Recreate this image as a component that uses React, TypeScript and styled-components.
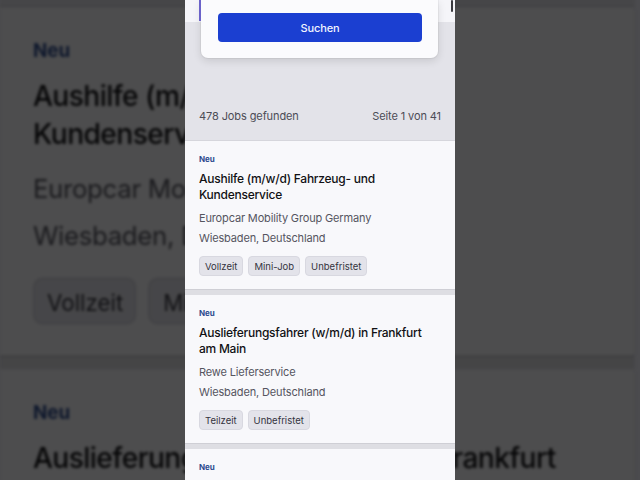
import React from "react";
import styled, { createGlobalStyle } from "styled-components";

const Global = createGlobalStyle`
  html, body { margin: 0; padding: 0; background: #4b4b4e; }
  body { font-family: Inter, "Noto Sans", "Liberation Sans", sans-serif; }
  * { box-sizing: border-box; }
`;

const Stage = styled.div`
  position: relative;
  width: 640px;
  height: 480px;
  overflow: hidden;
  display: flex;
  justify-content: center;
  background: #4b4b4e;
`;

const Backdrop = styled.div`
  position: absolute;
  left: 0;
  top: -323.6px;
  transform: scale(2.35);
  transform-origin: 0 0;
  filter: blur(0.6px) brightness(0.31);
`;

const Screen = styled.div`
  position: relative;
  width: 270px;
  height: 480px;
  overflow: hidden;
  display: flex;
  flex-direction: column;
  background: #dedee3;
`;

const Header = styled.div`
  display: flex;
  flex-direction: column;
  padding: 0 17px 0 16px;
  background: linear-gradient(#f5f5f9 0 22px, #e3e3e9 22px);
  border-bottom: 1px solid #d6d6dc;
`;

const SearchCard = styled.div`
  position: relative;
  background: #fbfbfd;
  border-radius: 0 0 7px 7px;
  padding: 13px 16px 16px 17px;
  box-shadow: 0 3px 8px rgba(0, 0, 0, 0.12), 0 0 0 1px rgba(0, 0, 0, 0.04);
  &::before {
    content: "";
    position: absolute;
    left: -2px;
    top: 0;
    width: 2px;
    height: 21px;
    background: #6b62c9;
  }
`;

const SearchButton = styled.button`
  display: block;
  width: 100%;
  height: 29px;
  border: none;
  border-radius: 4px;
  background: #1b3fd1;
  color: #f2f4ff;
  font-family: inherit;
  font-size: 11px;
  font-weight: 500;
  letter-spacing: -0.1px;
`;

const ResultsRow = styled.div`
  display: flex;
  justify-content: space-between;
  align-items: center;
  margin: 50px -3px 0 -2px;
  height: 16px;
  margin-bottom: 16px;
  font-size: 11px;
  letter-spacing: -0.1px;
  color: #4c4c56;
`;

const List = styled.div`
  display: flex;
  flex-direction: column;
  gap: 6px;
`;

const Card = styled.div`
  display: flex;
  flex-direction: column;
  align-items: flex-start;
  padding: 13px 14px 13px;
  background: #f8f8fb;
  box-shadow: 0 1px 0 #cfcfd5;
`;

const Badge = styled.div`
  font-size: 8px;
  line-height: 10px;
  font-weight: 700;
  color: #2d4b8e;
`;

const Title = styled.div`
  margin-top: 7px;
  font-size: 12px;
  line-height: 16px;
  font-weight: 500;
  letter-spacing: -0.25px;
  color: #111114;
`;

const Meta = styled.div<{ $gap: number }>`
  margin-top: ${(p) => p.$gap}px;
  font-size: 11px;
  line-height: 14px;
  letter-spacing: -0.15px;
  color: #55555f;
`;

const Tags = styled.div`
  margin-top: 11px;
  display: flex;
  gap: 5px;
`;

const Tag = styled.span`
  display: inline-flex;
  align-items: center;
  height: 20px;
  padding: 0 5px;
  border-radius: 4px;
  background: #e3e3ea;
  border: 1px solid #d8d8e0;
  font-size: 9.5px;
  color: #34343e;
`;

const Scrollbar = styled.div`
  position: absolute;
  right: 2px;
  top: 0;
  width: 2px;
  height: 12px;
  border-radius: 1px;
  background: #3a3a3f;
`;

type Job = { title: string; company: string; location: string; tags: string[] };

const jobs: Job[] = [
  {
    title: "Aushilfe (m/w/d) Fahrzeug- und Kundenservice",
    company: "Europcar Mobility Group Germany",
    location: "Wiesbaden, Deutschland",
    tags: ["Vollzeit", "Mini-Job", "Unbefristet"],
  },
  {
    title: "Auslieferungsfahrer (w/m/d) in Frankfurt am Main",
    company: "Rewe Lieferservice",
    location: "Wiesbaden, Deutschland",
    tags: ["Teilzeit", "Unbefristet"],
  },
  {
    title: "Fahrer (m/w/d) im Kurierdienst",
    company: "Logistik Partner GmbH",
    location: "Wiesbaden, Deutschland",
    tags: ["Vollzeit", "Unbefristet"],
  },
];

function JobScreen() {
  return (
    <Screen>
      <Header>
        <SearchCard>
          <SearchButton>Suchen</SearchButton>
        </SearchCard>
        <ResultsRow>
          <span>478 Jobs gefunden</span>
          <span>Seite 1 von 41</span>
        </ResultsRow>
      </Header>
      <List>
        {jobs.map((j) => (
          <Card key={j.title}>
            <Badge>Neu</Badge>
            <Title>{j.title}</Title>
            <Meta $gap={8}>{j.company}</Meta>
            <Meta $gap={6}>{j.location}</Meta>
            <Tags>
              {j.tags.map((t) => (
                <Tag key={t}>{t}</Tag>
              ))}
            </Tags>
          </Card>
        ))}
      </List>
      <Scrollbar />
    </Screen>
  );
}

export default function App() {
  return (
    <>
      <Global />
      <Stage>
        <Backdrop aria-hidden>
          <JobScreen />
        </Backdrop>
        <JobScreen />
      </Stage>
    </>
  );
}
